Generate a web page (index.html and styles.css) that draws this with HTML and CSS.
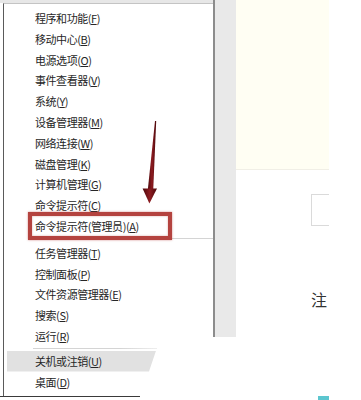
FILE: index.html
```html
<!DOCTYPE html>
<html>
<head>
<meta charset="utf-8">
<link rel="stylesheet" href="styles.css">
</head>
<body>
<div class="page">
  <div class="left-col">
    <div class="menu">
      <div class="item">程序和功能(<u>F</u>)</div>
      <div class="item">移动中心(<u>B</u>)</div>
      <div class="item">电源选项(<u>O</u>)</div>
      <div class="item">事件查看器(<u>V</u>)</div>
      <div class="item">系统(<u>Y</u>)</div>
      <div class="item">设备管理器(<u>M</u>)</div>
      <div class="item">网络连接(<u>W</u>)</div>
      <div class="item">磁盘管理(<u>K</u>)</div>
      <div class="item">计算机管理(<u>G</u>)</div>
      <div class="item">命令提示符(<u>C</u>)</div>
      <div class="item">命令提示符(管理员)(<u>A</u>)</div>
      <div class="sep"></div>
      <div class="item">任务管理器(<u>T</u>)</div>
      <div class="item">控制面板(<u>P</u>)</div>
      <div class="item">文件资源管理器(<u>E</u>)</div>
      <div class="item">搜索(<u>S</u>)</div>
      <div class="item">运行(<u>R</u>)</div>
      <div class="sep short"></div>
      <div class="item hl">关机或注销(<u>U</u>)</div>
      <div class="item">桌面(<u>D</u>)</div>
    </div>
    <div class="menu-bottom"></div>
  </div>
  <div class="strip"></div>
  <div class="right">
    <div class="cream"></div>
    <div class="box"></div>
    <div class="note">注</div>
    <div class="cyan"></div>
  </div>
</div>
<div class="redbox"></div>
<svg class="arrow" width="361" height="400" viewBox="0 0 361 400">
  <defs>
    <linearGradient id="ag" x1="0" y1="0" x2="1" y2="0">
      <stop offset="0" stop-color="#4a080b"/>
      <stop offset="0.5" stop-color="#8e1b20"/>
      <stop offset="1" stop-color="#4a080b"/>
    </linearGradient>
  </defs>
  <polygon points="155,121 156.2,121 153.2,190 147.8,190" fill="url(#ag)"/>
  <polygon points="142.6,188.5 157,188.5 149.4,203.5" fill="url(#ag)"/>
</svg>
</body>
</html>
```

FILE: styles.css
```css
html, body {
  margin: 0;
  padding: 0;
}
body {
  width: 361px;
  height: 400px;
  overflow: hidden;
  background: #ffffff;
  position: relative;
  font-family: "Noto Sans CJK SC", "Noto Sans", sans-serif;
}
.page {
  display: flex;
  align-items: flex-start;
  height: 400px;
}
.left-col {
  width: 213px;
  flex: none;
  display: flex;
  flex-direction: column;
  border-top: 3px solid #e7e7e7;
}
.menu {
  margin-left: 3px;
  height: 393px;
  box-sizing: border-box;
  background: #ffffff;
  border-left: 1px solid #5a5a5a;
  border-top: 1px solid #c4c4c4;
  padding-top: 4px;
  display: flex;
  flex-direction: column;
}
.item {
  height: 20.8px;
  line-height: 20.8px;
  padding-left: 31px;
  font-size: 11px;
  letter-spacing: -0.45px;
  color: #262626;
  white-space: nowrap;
}
.item u {
  text-decoration: underline;
  text-underline-offset: 1px;
}
.sep {
  height: 1px;
  margin: 1px 0 4px 29px;
  background: #d4d4d4;
}
.sep.short {
  width: 124px;
  margin: 1px 0 2px 29px;
  background: linear-gradient(to right, #d4d4d4 70%, #eeeeee);
}
.item.hl {
  margin-left: 3px;
  width: 149px;
  padding-left: 28px;
  box-sizing: border-box;
  background: #e1e1e1;
  clip-path: polygon(0 0, 100% 0, calc(100% - 7px) 100%, 0 100%);
}
.menu-bottom {
  width: 140px;
  height: 1px;
  background: #3a3a3a;
}
.strip {
  width: 21px;
  height: 337px;
  flex: none;
  background: #e9e9e9;
  border-left: 2px solid #8c8c8c;
}
.right {
  width: 93px;
  flex: none;
  overflow: hidden;
  display: flex;
  flex-direction: column;
  height: 400px;
}
.cream {
  height: 169px;
  background: #fffef3;
  border-bottom: 1px solid #f1efe6;
}
.box {
  margin-top: 24px;
  margin-left: 75px;
  width: 40px;
  height: 32px;
  box-sizing: border-box;
  border: 1px solid #dadada;
  flex: none;
}
.note {
  margin-top: 63px;
  margin-left: 75px;
  font-size: 16px;
  line-height: 20px;
  color: #333333;
}
.cyan {
  margin-top: 87px;
  margin-left: 82px;
  width: 11px;
  height: 4px;
  background: #5cc6cf;
  flex: none;
}
.redbox {
  position: absolute;
  left: 28px;
  top: 212px;
  width: 144px;
  height: 28px;
  box-sizing: border-box;
  border: 4px solid #b4433f;
  box-shadow: 0 0 2px rgba(180, 67, 63, 0.6), inset 0 0 2px rgba(180, 67, 63, 0.5);
}
.arrow {
  position: absolute;
  left: 0;
  top: 0;
  pointer-events: none;
}
```
